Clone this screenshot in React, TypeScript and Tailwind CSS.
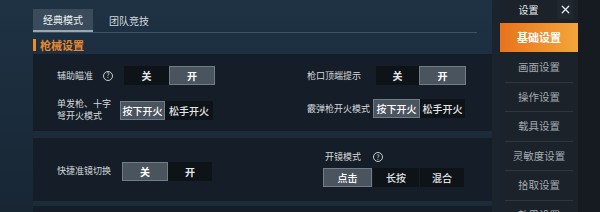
import { X } from "lucide-react";

const font = { fontFamily: '"Noto Sans CJK SC", "Noto Sans", sans-serif' };

function Help() {
  return (
    <span className="flex h-[10px] w-[10px] items-center justify-center rounded-full border border-[#c9ced3] text-[7px] leading-none text-[#c9ced3]">
      ?
    </span>
  );
}

function Seg({ items, active, widths, bold }: { items: string[]; active: number; widths: string[]; bold?: boolean }) {
  return (
    <div className="flex h-[19px]">
      {items.map((t, i) => (
        <div
          key={t}
          className={
            "flex items-center justify-center text-[10px] " +
            (bold ? "font-bold " : "font-medium ") +
            widths[i] +
            (i === active
              ? " border border-[#717c87] bg-[#4a545f] text-white"
              : " bg-[#0e1318] text-[#e4e7ea]")
          }
        >
          {t}
        </div>
      ))}
    </div>
  );
}

export default function App() {
  const menu = ["画面设置", "操作设置", "载具设置", "灵敏度设置", "拾取设置", "效果设置"];
  return (
    <div style={font} className="flex h-[212px] w-[600px] overflow-hidden bg-[#1a2836] text-[#d6dadd]">
      {/* main */}
      <div className="flex w-[492px] flex-col bg-gradient-to-b from-[#1e3244] to-[#182634] pl-[33px]">
        <div className="flex h-[32px] shrink-0 items-end pt-[9px]">
          <div className="flex h-[23px] w-[60px] items-center justify-center border-b-2 border-[#9aa8b4] bg-[#3a4c5b] text-[10px] text-[#eef1f3]">
            经典模式
          </div>
          <div className="flex h-[23px] w-[72px] items-center justify-center text-[10px] text-[#d2d8dd]">
            团队竞技
          </div>
        </div>
        <div className="mr-[15px] h-px shrink-0 bg-[#3f5162]" />
        <div className="flex h-[20px] shrink-0 items-center gap-[4px] pt-[4px]">
          <span className="h-[12px] w-[3px] bg-[#f08a24]" />
          <span className="text-[11px] font-bold text-[#e9892e]">枪械设置</span>
        </div>

        <div className="mt-px flex h-[77px] shrink-0 bg-[#151e28] pt-[12px]">
          <div className="flex w-[257px] flex-col gap-[13px] pl-[24px]">
            <div className="flex items-center">
              <span className="w-[46px] text-[9px]">辅助瞄准</span>
              <Help />
              <span className="w-[11px]" />
              <Seg items={["关", "开"]} active={1} widths={["w-[45px]", "w-[46px]"]} bold />
            </div>
            <div className="flex items-center">
              <span className="w-[63px] text-[9px] leading-[12px]">
                单发枪、十字
                <br />
                弩开火模式
              </span>
              <Seg items={["按下开火", "松手开火"]} active={0} widths={["w-[45px]", "w-[48px]"]} />
            </div>
          </div>
          <div className="flex flex-col gap-[14px] pl-[17px]">
            <div className="flex items-center">
              <span className="w-[69px] text-[9px]">枪口顶端提示</span>
              <Seg items={["关", "开"]} active={1} widths={["w-[43px]", "w-[47px]"]} bold />
            </div>
            <div className="flex items-center">
              <span className="w-[66px] text-[9px]">霰弹枪开火模式</span>
              <Seg items={["按下开火", "松手开火"]} active={0} widths={["w-[47px]", "w-[45px]"]} />
            </div>
          </div>
        </div>

        <div className="h-[7px] shrink-0 bg-[#1c2b38]" />

        <div className="flex h-[63px] shrink-0 bg-[#151e28]">
          <div className="flex w-[257px] items-center pl-[24px] pt-[3px]">
            <span className="w-[65px] text-[9px]">快捷准镜切换</span>
            <Seg items={["关", "开"]} active={0} widths={["w-[46px]", "w-[44px]"]} bold />
          </div>
          <div className="flex flex-col pl-[33px] pt-[13px]">
            <div className="flex h-[12px] items-center gap-[12px] pl-[2px]">
              <span className="text-[9px]">开镜模式</span>
              <Help />
            </div>
            <div className="mt-[5px] flex gap-px">
              <Seg items={["点击"]} active={0} widths={["w-[49px]"]} />
              <Seg items={["长按"]} active={-1} widths={["w-[46px]"]} />
              <Seg items={["混合"]} active={-1} widths={["w-[44px]"]} />
            </div>
          </div>
        </div>

        <div className="h-[5px] shrink-0 bg-[#1c2b38]" />
        <div className="flex-1 bg-[#151e28]" />
      </div>

      {/* gap */}
      <div className="w-[8px] bg-[#1b232c]" />

      {/* sidebar */}
      <div className="flex w-[78px] flex-col overflow-hidden bg-[#1b2229]">
        <div className="flex h-[19px] shrink-0">
          <div className="flex w-[57px] items-center justify-center text-[10px] text-[#e6e9eb]">设置</div>
          <div className="flex w-[16px] items-center justify-center bg-[#20272e] text-[#eef0f2]">
            <X size={13} strokeWidth={2.2} />
          </div>
        </div>
        <div className="mt-[4px] flex h-[29px] shrink-0 items-center justify-center bg-gradient-to-r from-[#e8731c] to-[#f2a53a] text-[11px] font-bold text-white">
          基础设置
        </div>
        <div className="mt-px flex shrink-0 flex-col px-[5px]">
          {menu.map((m) => (
            <div
              key={m}
              className="flex h-[29.5px] shrink-0 items-center justify-center border-b border-[#2e363e] text-[10.5px] text-[#a3abb2]"
            >
              {m}
            </div>
          ))}
        </div>
      </div>
      <div className="flex-1 bg-[#161b21]" />
    </div>
  );
}
